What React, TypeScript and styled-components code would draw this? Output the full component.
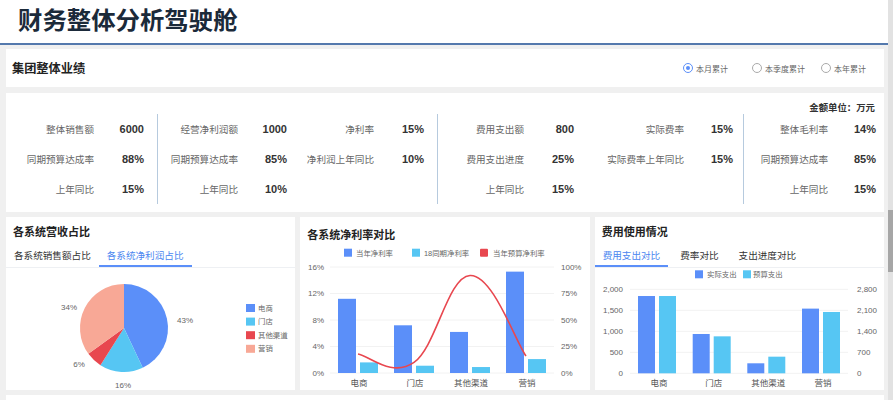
import React from "react";
import styled, { createGlobalStyle } from "styled-components";

const BLUE = "#5b8ff9";
const CYAN = "#56c6f3";
const RED = "#e8474f";
const SALMON = "#f8a896";
const FONT = `"Liberation Sans", "Noto Sans CJK SC", sans-serif`;

const GlobalStyle = createGlobalStyle`
  html, body { margin: 0; padding: 0; }
  body {
    width: 893px;
    height: 400px;
    overflow: hidden;
    background: #f0f0f0;
    font-family: ${FONT};
    color: #333;
  }
`;

// 상단 KPI 데이터
type KpiGroup = { cols: number[]; rows: string[][] };

const kpiGroups: KpiGroup[] = [
  {
    cols: [87, 50],
    rows: [
      ["整体销售额", "6000"],
      ["同期预算达成率", "88%"],
      ["上年同比", "15%"],
    ],
  },
  {
    cols: [80, 49, 87, 50],
    rows: [
      ["经营净利润额", "1000", "净利率", "15%"],
      ["同期预算达成率", "85%", "净利润上年同比", "10%"],
      ["上年同比", "10%", "", ""],
    ],
  },
  {
    cols: [86, 50, 110, 49],
    rows: [
      ["费用支出额", "800", "实际费率", "15%"],
      ["费用支出进度", "25%", "实际费率上年同比", "15%"],
      ["上年同比", "15%", "", ""],
    ],
  },
  {
    cols: [84, 48],
    rows: [
      ["整体毛利率", "14%"],
      ["同期预算达成率", "85%"],
      ["上年同比", "15%"],
    ],
  },
];

const groupWidths = [151, 280, 306, 141];

const categories = ["电商", "门店", "其他渠道", "营销"];

const App = () => {
  return (
    <Page>
      <GlobalStyle />
      <Main>
        <Header>
          <Title>财务整体分析驾驶舱</Title>
        </Header>
        <Content>
          <FilterBar>
            <SectionTitle>集团整体业绩</SectionTitle>
            <RadioGroup>
              <RadioItem>
                <RadioCircle $checked />
                本月累计
              </RadioItem>
              <RadioItem>
                <RadioCircle />
                本季度累计
              </RadioItem>
              <RadioItem>
                <RadioCircle />
                本年累计
              </RadioItem>
            </RadioGroup>
          </FilterBar>

          <KpiPanel>
            <Unit>金额单位：万元</Unit>
            <KpiRow>
              {kpiGroups.map((g, gi) => (
                <KpiGrid
                  key={gi}
                  $width={groupWidths[gi]}
                  $divider={gi > 0}
                  $cols={g.cols.map((c) => `${c}px`).join(" ")}
                >
                  {g.rows.map((row, ri) =>
                    row.map((cell, ci) =>
                      ci % 2 === 0 ? (
                        <KpiLabel key={`${ri}-${ci}`}>{cell}</KpiLabel>
                      ) : (
                        <KpiValue key={`${ri}-${ci}`}>{cell}</KpiValue>
                      )
                    )
                  )}
                </KpiGrid>
              ))}
            </KpiRow>
          </KpiPanel>

          <ChartsRow>
            <ChartPanel $pt={8}>
              <ChartTitle>各系统营收占比</ChartTitle>
              <TabBar $gap={0}>
                <Tab>各系统销售额占比</Tab>
                <Tab $active>各系统净利润占比</Tab>
              </TabBar>
              <PieChart />
            </ChartPanel>

            <ChartPanel $pt={11}>
              <ChartTitle>各系统净利率对比</ChartTitle>
              <RateChart />
            </ChartPanel>

            <ChartPanel $pt={8}>
              <ChartTitle>费用使用情况</ChartTitle>
              <TabBar $gap={4}>
                <Tab $active>费用支出对比</Tab>
                <Tab>费率对比</Tab>
                <Tab>支出进度对比</Tab>
              </TabBar>
              <CostChart />
            </ChartPanel>
          </ChartsRow>

          <NextPanel />
        </Content>
      </Main>
      <ScrollTrack>
        <ScrollThumb />
      </ScrollTrack>
    </Page>
  );
};

export default App;

// 파이 차트
const pieData = [
  { name: "电商", value: 43, label: "43%", color: BLUE, lx: 179, ly: 52 },
  { name: "门店", value: 16, label: "16%", color: CYAN, lx: 117, ly: 117 },
  { name: "其他渠道", value: 6, label: "6%", color: RED, lx: 73, ly: 96 },
  { name: "营销", value: 35, label: "34%", color: SALMON, lx: 63, ly: 39 },
];

const PieChart = () => {
  const cx = 118;
  const cy = 60;
  const r = 44;
  let acc = 0;
  const pt = (f: number) => {
    const a = f * Math.PI * 2;
    return [cx + r * Math.sin(a), cy - r * Math.cos(a)];
  };

  return (
    <ChartSvg width={289} height={122}>
      {pieData.map((d) => {
        const start = acc / 100;
        acc += d.value;
        const end = acc / 100;
        const [x0, y0] = pt(start);
        const [x1, y1] = pt(end);
        const large = end - start > 0.5 ? 1 : 0;
        return (
          <path
            key={d.name}
            d={`M${cx},${cy} L${x0},${y0} A${r},${r} 0 ${large} 1 ${x1},${y1} Z`}
            fill={d.color}
          />
        );
      })}
      {pieData.map((d) => (
        <PieLabel key={d.name} x={d.lx} y={d.ly}>
          {d.label}
        </PieLabel>
      ))}
      {pieData.map((d, i) => (
        <g key={d.name}>
          <rect x={240} y={36 + i * 13.6} width={9} height={8} fill={d.color} />
          <LegendText x={252} y={40 + i * 13.6}>
            {d.name}
          </LegendText>
        </g>
      ))}
    </ChartSvg>
  );
};

// 부드러운 곡선
const smoothPath = (pts: number[][]) => {
  let d = `M${pts[0][0]},${pts[0][1]}`;
  for (let i = 0; i < pts.length - 1; i++) {
    const p0 = pts[i - 1] || pts[i];
    const p1 = pts[i];
    const p2 = pts[i + 1];
    const p3 = pts[i + 2] || p2;
    const c1x = p1[0] + (p2[0] - p0[0]) / 5;
    const c1y = p1[1] + (p2[1] - p0[1]) / 5;
    const c2x = p2[0] - (p3[0] - p1[0]) / 5;
    const c2y = p2[1] - (p3[1] - p1[1]) / 5;
    d += ` C${c1x},${c1y} ${c2x},${c2y} ${p2[0]},${p2[1]}`;
  }
  return d;
};

const RateChart = () => {
  const base = 131;
  const top = 25;
  const h = base - top;
  const centers = [58, 114, 170, 226];
  const cur = [11.2, 7.2, 6.2, 15.3];
  const last = [1.6, 1.1, 0.9, 2.1];
  const budget = [18, 10, 92, 16];
  const ticksL = ["0%", "4%", "8%", "12%", "16%"];
  const ticksR = ["0%", "25%", "50%", "75%", "100%"];

  return (
    <ChartSvg width={289} height={148}>
      <rect x={44} y={6.7} width={8} height={8} fill={BLUE} />
      <LegendText x={56} y={11}>当年净利率</LegendText>
      <rect x={112} y={6.7} width={8} height={8} fill={CYAN} />
      <LegendText x={124} y={11}>18同期净利率</LegendText>
      <rect x={180} y={6.7} width={8} height={8} rx={1} fill={RED} />
      <LegendText x={193} y={11}>当年预算净利率</LegendText>

      {ticksL.map((t, i) => {
        const y = base - (h / 4) * i;
        return (
          <g key={t}>
            <line x1={30} x2={254} y1={y} y2={y} stroke="#f2f2f2" />
            <AxisText x={24} y={y} textAnchor="end">
              {t}
            </AxisText>
            <AxisText x={261} y={y}>
              {ticksR[i]}
            </AxisText>
          </g>
        );
      })}

      {centers.map((c, i) => (
        <g key={c}>
          <rect x={c - 20} y={base - (cur[i] / 16) * h} width={18} height={(cur[i] / 16) * h} fill={BLUE} />
          <rect x={c + 2} y={base - (last[i] / 16) * h} width={18} height={(last[i] / 16) * h} fill={CYAN} />
          <CategoryText x={c + 1} y={141}>
            {categories[i]}
          </CategoryText>
        </g>
      ))}

      <path
        d={smoothPath(centers.map((c, i) => [c, base - (budget[i] / 100) * h]))}
        fill="none"
        stroke={RED}
        strokeWidth={1.6}
      />
    </ChartSvg>
  );
};

const CostChart = () => {
  const base = 105.3;
  const top = 21.3;
  const h = base - top;
  const centers = [62, 116.7, 171.3, 226];
  const actual = [1840, 936, 238, 1540];
  const budget = [2576, 1232, 554, 2044];
  const ticksL = ["0", "500", "1,000", "1,500", "2,000"];
  const ticksR = ["0", "700", "1,400", "2,100", "2,800"];

  return (
    <ChartSvg width={289} height={122}>
      <rect x={100} y={2.3} width={8} height={8} fill={BLUE} />
      <LegendText x={112} y={6.5}>实际支出</LegendText>
      <rect x={148} y={2.3} width={8} height={8} fill={CYAN} />
      <LegendText x={158} y={6.5}>预算支出</LegendText>

      {ticksL.map((t, i) => {
        const y = base - (h / 4) * i;
        return (
          <g key={t}>
            <line x1={35} x2={253} y1={y} y2={y} stroke="#f2f2f2" />
            <AxisText x={28} y={y} textAnchor="end">
              {t}
            </AxisText>
            <AxisText x={262} y={y}>
              {ticksR[i]}
            </AxisText>
          </g>
        );
      })}

      {centers.map((c, i) => (
        <g key={c}>
          <rect x={c - 19} y={base - (actual[i] / 2000) * h} width={17} height={(actual[i] / 2000) * h} fill={BLUE} />
          <rect x={c + 2} y={base - (budget[i] / 2800) * h} width={17} height={(budget[i] / 2800) * h} fill={CYAN} />
          <CategoryText x={c + 2} y={115.3}>
            {categories[i]}
          </CategoryText>
        </g>
      ))}
    </ChartSvg>
  );
};

const Page = styled.div`
  display: flex;
  width: 893px;
  height: 400px;
  overflow: hidden;
`;

const Main = styled.div`
  flex: 1;
  min-width: 0;
`;

const Header = styled.header`
  height: 43px;
  background: #fff;
  border-bottom: 2px solid #5479ad;
  display: flex;
  align-items: center;
  padding-left: 18px;
`;

const Title = styled.h1`
  margin: 0;
  font-size: 24.4px;
  font-weight: 700;
  color: #1b2a3a;
  line-height: 1;
  padding-bottom: 1px;
`;

const Content = styled.div`
  display: flex;
  flex-direction: column;
  padding: 0 4px 0 6px;
`;

const FilterBar = styled.section`
  flex-shrink: 0;
  margin-top: 4px;
  height: 38px;
  background: #fff;
  display: flex;
  align-items: center;
  justify-content: space-between;
  padding: 0 18px 0 6px;
`;

const SectionTitle = styled.h2`
  margin: 0;
  font-size: 12.2px;
  font-weight: 700;
  color: #222;
`;

const RadioGroup = styled.div`
  display: flex;
  align-items: center;
`;

const RadioItem = styled.label`
  min-width: 69px;
  display: flex;
  align-items: center;
  gap: 3.5px;
  font-size: 8px;
  color: #666;
  &:last-child {
    min-width: 0;
  }
`;

const RadioCircle = styled.span<{ $checked?: boolean }>`
  width: 10px;
  height: 10px;
  box-sizing: border-box;
  border-radius: 50%;
  border: 1px solid ${(p) => (p.$checked ? BLUE : "#aaa")};
  display: flex;
  align-items: center;
  justify-content: center;
  &::after {
    content: "";
    width: 4px;
    height: 4px;
    border-radius: 50%;
    background: ${(p) => (p.$checked ? BLUE : "transparent")};
  }
`;

const KpiPanel = styled.section`
  flex-shrink: 0;
  margin-top: 6px;
  height: 119px;
  box-sizing: border-box;
  background: #fff;
  padding-top: 8px;
`;

const Unit = styled.div`
  height: 13px;
  line-height: 13px;
  text-align: right;
  padding-right: 9px;
  font-size: 9.4px;
  font-weight: 700;
  color: #333;
`;

const KpiRow = styled.div`
  display: flex;
  height: 90px;
`;

const KpiGrid = styled.div<{ $width: number; $divider: boolean; $cols: string }>`
  width: ${(p) => p.$width}px;
  box-sizing: border-box;
  border-left: 1px solid ${(p) => (p.$divider ? "#b6cade" : "transparent")};
  display: grid;
  grid-template-columns: ${(p) => p.$cols};
  grid-auto-rows: 30px;
  align-items: center;
`;

const KpiLabel = styled.span`
  text-align: right;
  font-size: 9.6px;
  color: #666;
  white-space: nowrap;
`;

const KpiValue = styled.span`
  text-align: right;
  font-size: 11px;
  font-weight: 700;
  color: #333;
`;

const ChartsRow = styled.div`
  flex-shrink: 0;
  margin-top: 5px;
  height: 173px;
  display: grid;
  grid-template-columns: repeat(3, 1fr);
  gap: 5px;
`;

const ChartPanel = styled.section<{ $pt: number }>`
  background: #fff;
  display: flex;
  flex-direction: column;
  padding-top: ${(p) => p.$pt}px;
  overflow: hidden;
  min-width: 0;
`;

const ChartTitle = styled.h3`
  flex-shrink: 0;
  margin: 0;
  height: 14px;
  line-height: 14px;
  padding-left: 7px;
  font-size: 11px;
  font-weight: 700;
  color: #222;
`;

const TabBar = styled.div<{ $gap: number }>`
  flex-shrink: 0;
  margin-top: 6px;
  display: flex;
  gap: ${(p) => p.$gap}px;
  border-bottom: 1px solid #eef0f3;
`;

const Tab = styled.div<{ $active?: boolean }>`
  height: 22px;
  box-sizing: border-box;
  padding: 0 8px;
  line-height: 21px;
  font-size: 9.6px;
  white-space: nowrap;
  color: ${(p) => (p.$active ? "#4a86f0" : "#333")};
  border-bottom: 2px solid ${(p) => (p.$active ? BLUE : "transparent")};
`;

const ChartSvg = styled.svg`
  display: block;
  flex-shrink: 0;
  font-family: ${FONT};
`;

const AxisText = styled.text`
  font-size: 8px;
  fill: #666;
  dominant-baseline: central;
`;

const CategoryText = styled.text`
  font-size: 8.5px;
  fill: #555;
  text-anchor: middle;
  dominant-baseline: central;
`;

const LegendText = styled.text`
  font-size: 7.4px;
  fill: #666;
  dominant-baseline: central;
`;

const PieLabel = styled.text`
  font-size: 8px;
  fill: #666;
  text-anchor: middle;
  dominant-baseline: central;
`;

const NextPanel = styled.section`
  flex-shrink: 0;
  margin-top: 5px;
  height: 20px;
  background: #fff;
`;

const ScrollTrack = styled.div`
  width: 5px;
  background: #e2e2e2;
  display: flex;
  flex-direction: column;
`;

const ScrollThumb = styled.div`
  margin-top: 210px;
  height: 62px;
  background: #a6a6a6;
`;
